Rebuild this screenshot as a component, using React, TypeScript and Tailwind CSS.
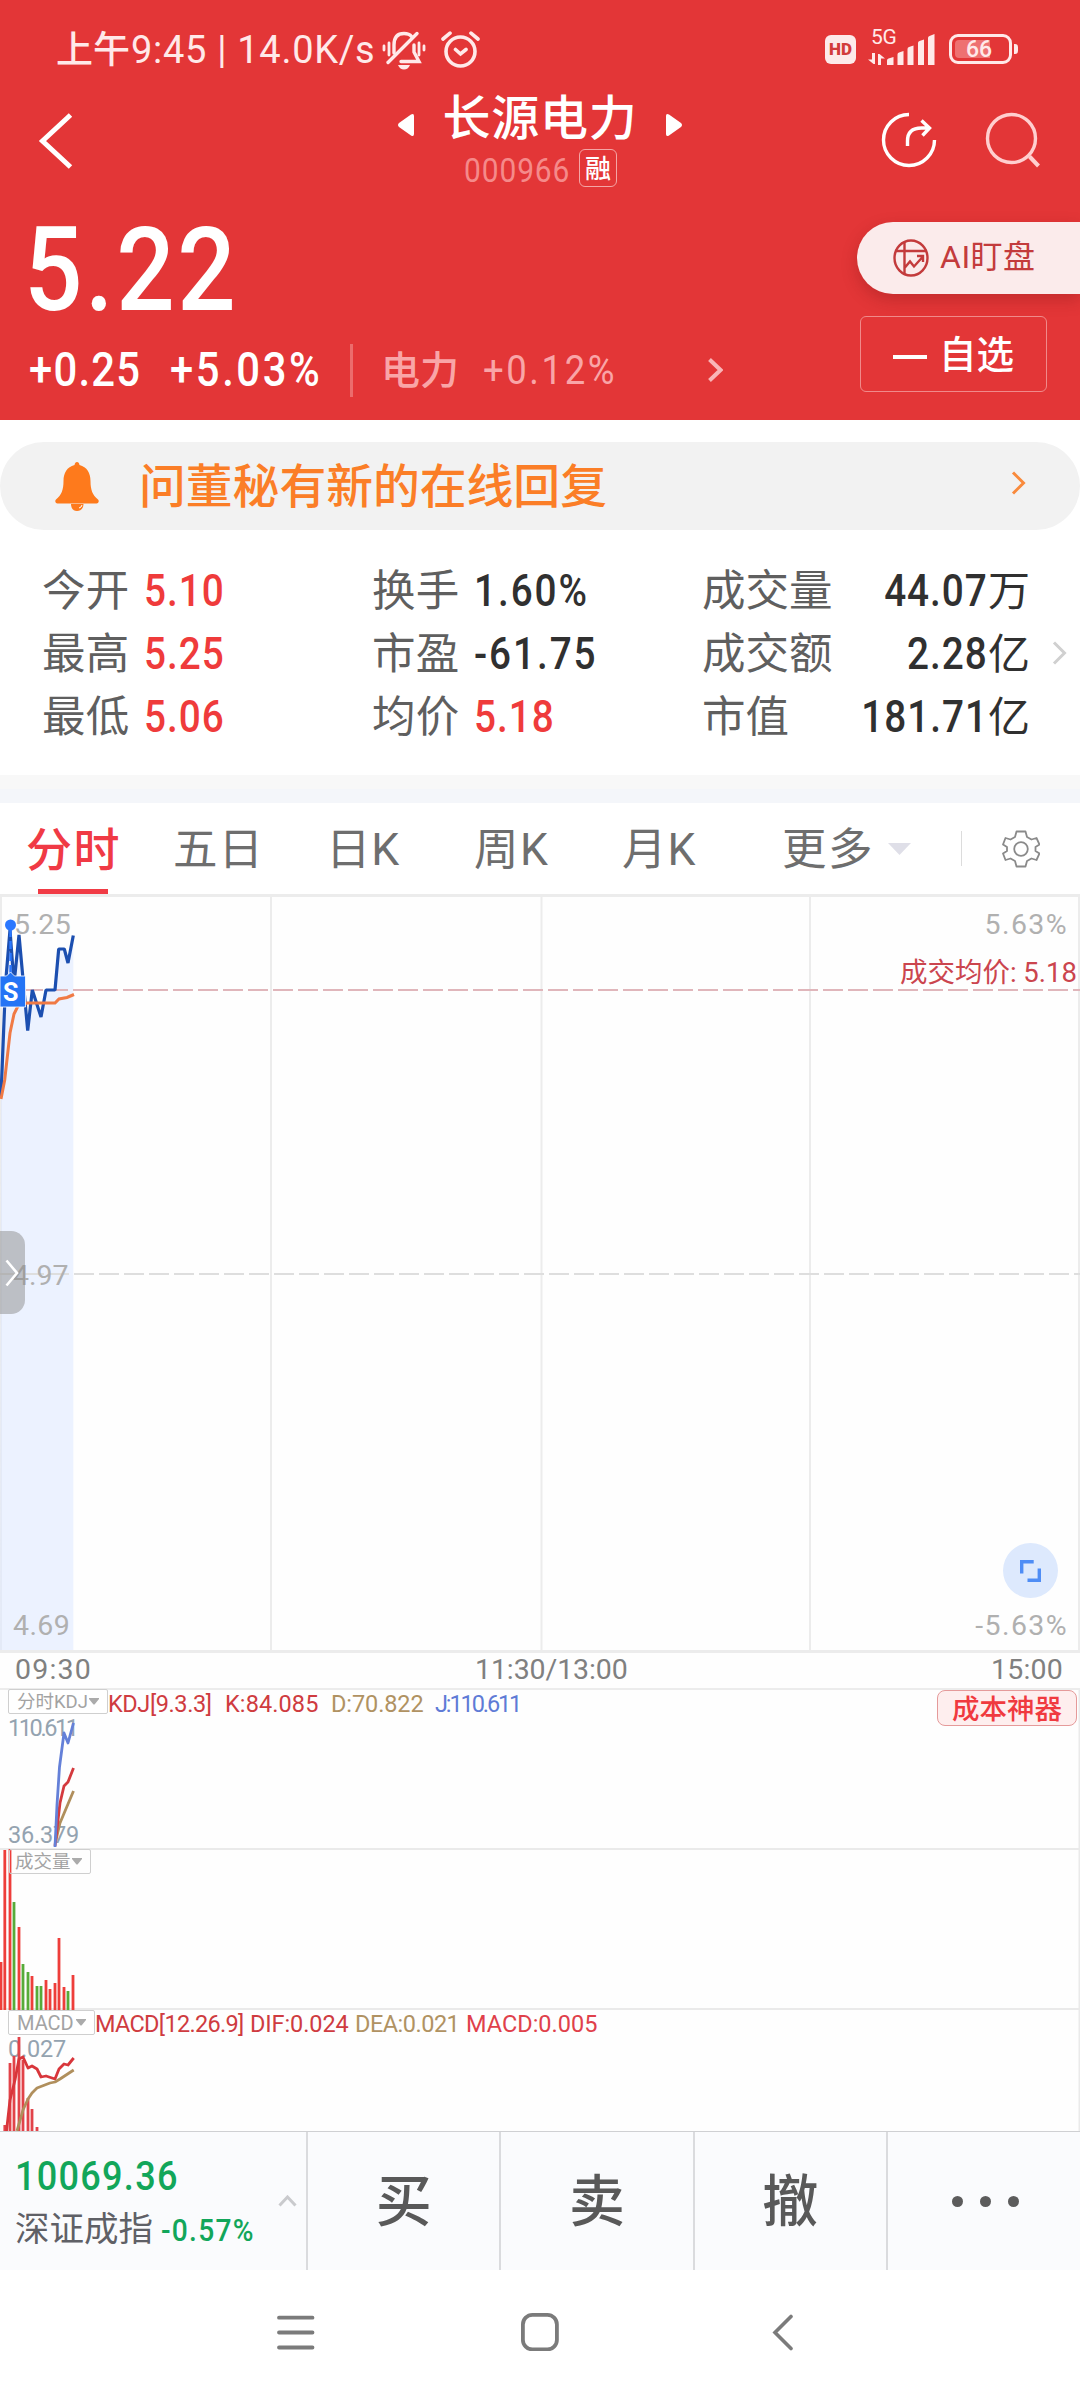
import clsx from "clsx";
import type { ReactNode } from "react";

const CJK = "font-['Noto_Sans_CJK_SC',sans-serif]";
const LATIN = "font-[Roboto,'Noto_Sans_CJK_SC',sans-serif]";

// narrow figures used for every price
function Num({ children, className }: { children: ReactNode; className?: string }) {
  return (
    <span
      className={clsx(
        LATIN,
        "inline-block whitespace-nowrap leading-none tracking-[0.025em] scale-x-[0.88]",
        className,
      )}
    >
      {children}
    </span>
  );
}

function StatusBar() {
  return (
    <div className="flex h-[72px] pl-[56px] text-[#ffe9e9]">
      <div className={clsx(LATIN, "w-[326px] pt-[28px] text-[38px] leading-[44px] whitespace-nowrap font-[450]")}>
        <span className="text-[37px]">上午</span>
        <span className="ml-px tracking-[0.7px]">9:45 | 14.0K/s</span>
      </div>
      <svg className="mt-[31px]" width="44" height="39" viewBox="0 0 44 39" fill="none" stroke="currentColor" strokeWidth="3.4" strokeLinecap="round">
        <path d="M2 15v4M7 12v12M37 12v12M42 15v4" strokeWidth="2.8" />
        <path d="M12 22V14C12 6 16 2.500 22 2.500 25 2.500 28 3.500 29.500 5.500" />
        <path d="M32 14v7l5 9.500H19" />
        <path d="M35 2.500 6 31.500" />
        <path d="M16 34h12q-2 4.500-6 4.500t-6-4.500z" fill="currentColor" stroke="none" />
      </svg>
      <svg className="mt-[31px] ml-[15px]" width="39" height="37" viewBox="0 0 39 37" fill="none" stroke="currentColor" strokeWidth="3.6" strokeLinecap="round">
        <circle cx="19.500" cy="20.500" r="14.500" />
        <path d="M2 8 9 2.200M37 8 30 2.200M14.500 18.500l5 4.500 5.500-4.500" />
      </svg>
      <div className="ml-[345px] mt-[35px] flex h-[29px] w-[31px] items-center justify-center rounded-[6px] bg-[#fdeaea]">
        <span className="font-[Roboto] text-[17px] leading-none font-black text-[#d23b3b]">HD</span>
      </div>
      <div className="ml-[12px] mt-[29px] w-[20px]">
        <div className="font-[Roboto] w-[28px] pl-[3px] text-[21px] leading-[17px] tracking-[-0.2px]">5G</div>
        <svg className="mt-[7px]" width="17" height="12" viewBox="0 0 17 12" fill="currentColor">
          <path d="M4 0h3v11H5.500L0 6.500h4zM10 12h3V5.500h4L11.500 1H10z" />
        </svg>
      </div>
      <svg className="mt-[34px] -ml-px" width="48" height="31" viewBox="0 0 48 31" fill="currentColor">
        <path d="M0 31v-4.500q0-1.500 1.500-2L6.500 23v8zM10.500 31V20.500q0-1.500 1.500-2l4.500-1.500v14zM20.500 31V15q0-1.500 1.500-2l4.500-1.500V31zM31 31V9q0-1.500 1.500-2L37 5.500V31zM41 31V4q0-1.500 1.500-2L47.500 0v31z" />
      </svg>
      <div className="relative ml-[14px] mt-[34px] flex h-[30px] w-[63px] items-center rounded-[9px] border-[3px] border-current pl-[3px]">
        <div className="h-[18px] w-[35px] rounded-l-[4px] bg-[#ee7171]" />
        <span className="absolute left-[14px] top-[1px] font-[Roboto] text-[23px] leading-[23px] font-medium">66</span>
      </div>
      <div className="ml-[2px] mt-[44px] h-[10px] w-[4px] rounded-r-[3px] bg-current" />
    </div>
  );
}

function TitleBar() {
  return (
    <div className="flex h-[128px] text-white">
      <div className="w-[398px] pl-[38px] pt-[40px]">
        <svg width="36" height="58" viewBox="0 0 36 58" fill="none" stroke="currentColor" strokeWidth="5">
          <path d="M32.500 3 4.500 29 32.500 55" />
        </svg>
      </div>
      <div className="w-[284px]">
        <div className="flex h-[76px] justify-between">
          <svg className="mt-[42px]" width="16" height="22" viewBox="0 0 16 22" fill="currentColor">
            <path d="M16 2v18q0 3-3 1.500L1 13q-2-2 0-4L13 .5q3-1.500 3 1.500z" />
          </svg>
          <h1 className={clsx(CJK, "mt-[17px] text-[48px] leading-[50px] font-medium tracking-[0.8px]")}>长源电力</h1>
          <svg className="mt-[42px]" width="16" height="22" viewBox="0 0 16 22" fill="currentColor">
            <path d="M0 2v18q0 3 3 1.500L15 13q2-2 0-4L3 .5Q0-1 0 2z" />
          </svg>
        </div>
        <div className="flex h-[40px] items-center pl-[66px]">
          <div className="w-[115px] pt-[4px]">
            <Num className="origin-left text-[34px] text-[#f58a8a] tracking-[0.03em]!">000966</Num>
          </div>
          <div className={clsx(CJK, "flex h-[38px] w-[38px] items-center justify-center rounded-[6px] border border-[#f4a5a5] text-[26px] leading-[32px] font-medium")}>
            <span className="-mt-[2px]">融</span>
          </div>
        </div>
      </div>
      <div className="flex pl-[199px] pt-[40px]">
        <svg width="56" height="56" viewBox="0 0 56 56" fill="none" stroke="currentColor" strokeWidth="3.4">
          <path d="M28 2.500A25.500 25.500 0 1 0 53.500 28" />
          <path d="M26.500 34v-5q0-13 14-13h7M40.500 8.500l8 7.500-7 7.500" />
        </svg>
        <svg className="ml-[48px]" width="56" height="56" viewBox="0 0 56 56" fill="none" stroke="#ffcfcf" strokeWidth="3.4">
          <circle cx="26.500" cy="26.500" r="24" />
          <path d="m44.500 44.500 9 9.500" strokeWidth="4" />
        </svg>
      </div>
    </div>
  );
}

function Quote() {
  return (
    <div className="flex h-[220px] text-white">
      <div className="w-[857px] pl-[24px]">
        <div className="pt-[10px]">
          <Num className="origin-left text-[117px] leading-[120px]! font-medium">5.22</Num>
        </div>
        <div className="mt-[12px] flex h-[56px] items-center pl-[5px]">
          <div className="w-[141px] pt-[2px]">
            <Num className="origin-left text-[47.5px] font-medium tracking-[0.03em]!">+0.25</Num>
          </div>
          <div className="w-[180px] pt-[2px]">
            <Num className="origin-left text-[47.5px] font-medium tracking-[0.062em]!">+5.03%</Num>
          </div>
          <div className="h-[53px] w-[3px] bg-[#ec6c6c]" />
          <div className={clsx(CJK, "ml-[28px] w-[102px] text-[39px] leading-[50px] text-[#f9a5a7] font-medium -mt-[6px]")}>电力</div>
          <div className="w-[225px] text-[#f9a5a7]">
            <Num className="origin-left text-[41.500px] tracking-[0.07em]!">+0.12%</Num>
          </div>
          <svg width="15" height="24" viewBox="0 0 15 24" fill="none" stroke="#f9b5b7" strokeWidth="4">
            <path d="m1.500 1.500 11 10.500-11 10.500" />
          </svg>
        </div>
      </div>
      <div className="w-[223px] pt-[22px]">
        <div className="flex h-[72px] items-center rounded-l-full bg-[#fbebeb] pl-[36px] text-[#c33b3c] shadow-[0_6px_16px_rgba(120,20,20,0.3)]">
          <svg width="36" height="38" viewBox="0 0 36 38" fill="none" stroke="currentColor" strokeWidth="2.4">
            <ellipse cx="18" cy="19" rx="16.500" ry="17.500" />
            <path d="M11.500 3v32M2 12h32M11.500 29l5.500-6.500 4 5 9-10M24 17h6v6" />
          </svg>
          <span className={clsx(LATIN, "ml-[11px] -mt-[2px] text-[32px] leading-[40px] whitespace-nowrap tracking-[0.5px]")}>AI盯盘</span>
        </div>
        <div className="ml-[3px] mt-[22px] flex h-[76px] w-[187px] items-center rounded-[6px] border border-[#f08a8a] pl-[32px]">
          <div className="mt-[6px] h-[4px] w-[34px] bg-white" />
          <span className={clsx(CJK, "ml-[12px] -mt-[4px] text-[37.500px] leading-[50px] font-medium whitespace-nowrap")}>自选</span>
        </div>
      </div>
    </div>
  );
}

function Notice() {
  return (
    <div className="mt-[22px] flex h-[88px] items-center rounded-full bg-[#f2f2f2]">
      <svg className="ml-[55px]" width="44" height="49" viewBox="0 0 44 49" fill="#fe7a1c">
        <path d="M22 0q2 0 2.500 3C32 5 35.500 11 35.500 19c0 9 2 14 7.500 18.500 1.500 1.500.5 4-1.500 4H2.500c-2 0-3-2.500-1.500-4C6.500 33 8.500 28 8.500 19c0-8 3.500-14 11-16Q20 0 22 0z" />
        <path d="M16 42h12.500c0 4-2.500 7-6.500 7s-6-3-6-7z" />
        <path d="M24 46q2.500-.5 3-3" stroke="#fff" fill="none" />
      </svg>
      <span className={clsx(CJK, "ml-[40px] w-[872px] -mt-[7px] text-[46.8px] leading-[60px] text-[#fb7e27] font-[450]")}>
        问董秘有新的在线回复
      </span>
      <svg className="-mt-[7px]" width="15" height="24" viewBox="0 0 15 24" fill="none" stroke="#f98a3c" strokeWidth="3">
        <path d="m2 1.500 10.500 10.500-10.500 10.500" />
      </svg>
    </div>
  );
}

const stats = [
  [["今开", "5.10", true], ["换手", "1.60%", false], ["成交量", "44.07", "万"]],
  [["最高", "5.25", true], ["市盈", "-61.75", false], ["成交额", "2.28", "亿"]],
  [["最低", "5.06", true], ["均价", "5.18", true], ["市值", "181.71", "亿"]],
] as const;

function Stats() {
  return (
    <div className="h-[245px] pt-[29px]">
      {stats.map(([a, b, c], i) => (
        <div key={a[0]} className={clsx(CJK, "flex h-[63px] items-center pl-[42px] text-[43.5px] leading-[63px] text-[#5f5f5f]")}>
          {[a, b].map(([label, value, up]) => (
            <div key={label} className="flex w-[330px] items-center">
              <span className="-mt-[6px] w-[102px] tracking-[0.2px]">{label}</span>
              <Num className={clsx("origin-left text-[44px] font-medium", up ? "text-[#ef3b3b]" : "text-[#303030] tracking-[0.05em]!")}>{value}</Num>
            </div>
          ))}
          <div className="flex w-[328px] items-center justify-between text-[#303030]">
            <span className="-mt-[6px] text-[#5f5f5f]">{c[0]}</span>
            <div className="flex items-center">
              <Num className="origin-right text-[44px] font-medium">{c[1]}</Num>
              <span className="-mt-[6px] text-[42px]">{c[2]}</span>
            </div>
          </div>
          {i === 1 && (
            <svg className="ml-[22px] -mt-[2px]" width="15" height="24" viewBox="0 0 15 24" fill="none" stroke="#d0d0d0" strokeWidth="3">
              <path d="m2 1.500 10.500 10.500-10.500 10.500" />
            </svg>
          )}
        </div>
      ))}
    </div>
  );
}

function Tabs() {
  return (
    <div className={clsx(LATIN, "flex h-[91px] items-start text-[44.5px] leading-[60px] whitespace-nowrap text-[#6e6e6e]")}>
      <div className="w-[173px] pl-[26px] font-medium text-[#f03a45]">
        <div className="pt-[17px] text-[46px] tracking-[1.5px]">分时</div>
        <div className="ml-[12px] mt-[9px] h-[5px] w-[70px] bg-[#f13b45]" />
      </div>
      <div className="w-[153px] pt-[17px] tracking-[1px]">五日</div>
      <div className="w-[148px] pt-[17px] tracking-[0.8px]">日K</div>
      <div className="w-[148px] pt-[17px] tracking-[1.5px]">周K</div>
      <div className="w-[160px] pt-[17px] tracking-[1px]">月K</div>
      <div className="w-[106px] pt-[17px] tracking-[1.5px]">更多</div>
      <svg className="mt-[40px]" width="23" height="12" viewBox="0 0 23 12" fill="#dfdfe8">
        <path d="M0 0h23L11.500 12z" />
      </svg>
      <div className="ml-[50px] mt-[28px] h-[35px] w-px bg-[#dcdcdc]" />
      <svg className="ml-[40px] mt-[27px]" width="38" height="38" viewBox="0 0 38 38" fill="none" stroke="#8a8a8a" strokeWidth="1.8" strokeLinejoin="round">
        <path d="M14.500 1.500h9l1.500 5.500 4.500 2.500 5-1.500 3 6.500-4 2.500v4l4 2.500-3 6.500-5-1.500-4.500 2.500-1.500 5.500h-9L13 31l-4.500-2.500-5 1.500-2.500-6.500L5 21v-4l-4-2.500L3.500 8l5 1.500L13 7z" />
        <circle cx="19" cy="19" r="6.800" />
      </svg>
    </div>
  );
}

const price = "1,202 4.500,115 6,84 10,36 14,90 19,41 27.700,136.500 32.300,96 41,123 46,96 55,96 58.700,55 64.300,55 68,69 73.300,41.500";

function PriceChart() {
  return (
    <div className={clsx(LATIN, "relative h-[759px] text-[28.5px] leading-[30px] whitespace-nowrap text-[#b0b0b0]")}>
      <svg width="1080" height="759" viewBox="0 0 1080 759" fill="none">
        <rect width="1080" height="759" fill="#fefefe" />
        <path d="M0 1.500h1080M0 757.500h1080" stroke="#ececec" strokeWidth="3" />
        <path d="M1 0v759M271 0v759M541.500 0v759M810 0v759M1079 0v759" stroke="#ececec" strokeWidth="2" />
        <polygon points={`0,756 ${price} 73.300,756`} fill="#dfe9ff" fillOpacity="0.6" />
        <path d="M0 96h1080" stroke="#e0b6bb" strokeWidth="2" strokeDasharray="20 5" strokeDashoffset="2" />
        <path d="M0 380h1080" stroke="#dedede" strokeWidth="2" strokeDasharray="20 5" strokeDashoffset="1" />
        <polyline points={price} stroke="#1c4fb0" strokeWidth="3.2" strokeLinejoin="bevel" />
        <polyline points="1,205 4.700,186 10,139 14,120 18,112 27,109 55,109 59,105 67,103.500 74,100.500" stroke="#f07a45" strokeWidth="3" />
        <path d="M10.500 35v50" stroke="#2b78ff" strokeWidth="2.400" strokeDasharray="8 4" />
        <circle cx="10.500" cy="31" r="5.500" fill="#2b78ff" />
        <path d="M0 82h6.500l4-4 4 4H25.500v31H0z" fill="#2474f5" stroke="#fff" strokeWidth="0.8" />
      </svg>
      <span className="absolute left-[3px] top-[85px] font-[Roboto] text-[25px] leading-[28px] font-bold text-white">S</span>
      <span className="absolute left-[14px] top-[16px] tracking-[0.4px]">5.25</span>
      <span className="absolute left-[13px] top-[367px]">4.97</span>
      <span className="absolute left-[13px] top-[717px] tracking-[0.4px]">4.69</span>
      <span className="absolute right-[12px] top-[16px] tracking-[1.4px]">5.63%</span>
      <span className="absolute right-[12px] top-[717px] tracking-[1.4px]">-5.63%</span>
      <span className="absolute right-[3px] top-[64px] text-[27.5px] text-[#cb454e]">成交均价: 5.18</span>
      <div className="absolute left-0 top-[337px] flex h-[83px] w-[25px] items-center rounded-r-[14px] bg-[#8b8b8b]/50 pl-[5px]">
        <svg width="14" height="28" viewBox="0 0 14 28" fill="none" stroke="#fff" strokeWidth="2.600">
          <path d="m1.500 1.500 10.500 12.500L1.500 26.500" />
        </svg>
      </div>
      <div className="absolute left-[1003px] top-[649px] flex h-[55px] w-[55px] items-center justify-center rounded-full bg-[#dde9fd]">
        <svg width="21" height="22" viewBox="0 0 21 22" fill="none" stroke="#4f8df5" strokeWidth="3.400">
          <path d="M1.700 13.500V1.700h12M19.300 8.500v11.800H7.500" />
        </svg>
      </div>
    </div>
  );
}

function PanelPicker({ label, className }: { label: string; className: string }) {
  return (
    <div className={clsx("absolute flex h-[25px] items-center justify-between rounded-[2px] border border-[#cfcfcf] pr-[8px] text-[#a3a3a3]", className)}>
      <span>{label}</span>
      <svg className="shrink-0" width="10" height="7" viewBox="0 0 10 7" fill="#ababab">
        <path d="M0 0h10v1L5.500 6.500h-1L0 1z" />
      </svg>
    </div>
  );
}

const volume = [
  [1, 1962, 0], [4.8, 1850, 0], [10, 1849, 0], [14, 1902, 1], [19, 1927, 0], [23, 1964, 1],
  [28, 1972, 1], [32, 1976, 0], [37, 1986, 1], [41, 1986, 1], [46, 1980, 0], [50, 1989, 0],
  [55, 1983, 0], [59, 1938, 0], [64, 1987, 0], [68, 1991, 1], [73, 1975, 0],
];

const macd = [[4.8, 2125], [10, 2063], [14, 2056], [19, 2037], [23, 2060], [28, 2098], [32, 2109], [37, 2127]];

function Indicators() {
  return (
    <div className={clsx(LATIN, "relative h-[443px] border-t-2 border-[#ececec] text-[23.5px] leading-[26px] whitespace-nowrap text-[#cf3b40]")}>
      {/* one pixel per unit, numbered from the top of the page */}
      <svg className="absolute left-0 top-0" width="1080" height="441" viewBox="0 1690 1080 441" fill="none">
        <rect y="1690" width="1080" height="441" fill="#fefefe" />
        <path d="M0 1849h1080M0 2009h1080M1079.500 1690v441" stroke="#eaeaea" strokeWidth="2" />
      </svg>
      <span className="absolute left-[8px] top-[25px] text-[#94a3b0] tracking-[-2.4px]">110.611</span>
      <span className="absolute left-[8px] top-[132px] text-[#94a3b0] tracking-[-0.2px]">36.379</span>
      <span className="absolute left-[8px] top-[346px] text-[#94a3b0] tracking-[-0.2px]">0.027</span>
      <svg className="absolute left-0 top-0" width="1080" height="441" viewBox="0 1690 1080 441" fill="none" strokeWidth="2.800" strokeLinejoin="round">
        <polyline points="56,1840 60,1823 68,1804 73.500,1791" stroke="#b08f5c" />
        <polyline points="55,1846 60,1803 64,1786 68,1782 73.500,1768" stroke="#d43a3e" />
        <polyline points="55,1847 57,1805 59.500,1767 64,1733 68,1743 73.500,1723" stroke="#6480d8" />
        {volume.map(([x, y, down]) => (
          <path key={x} d={`M${x} ${y}V2010`} stroke={down ? "#57ab3a" : "#ee3e3a"} />
        ))}
        {macd.map(([x, y]) => (
          <path key={x} d={`M${x} ${y}V2131`} stroke="#e24349" />
        ))}
        <polyline points="6.500,2131 10,2100 15,2080 19,2059 23,2057 28,2068 32,2066 37,2069 41,2077 46,2076 55,2079 59,2069 64,2064 68,2065 73.700,2058" stroke="#d8363b" />
        <polyline points="17,2131 23,2110 28,2099 32,2093 37,2088 50,2083 55,2082 60,2079 73.700,2070" stroke="#b08f5c" />
      </svg>
      <PanelPicker label="分时KDJ" className="left-[8px] -top-px w-[100px] bg-white pl-[8px] text-[18.500px]" />
      <PanelPicker label="成交量" className="left-[9px] top-[159px] w-[82px] pl-[5px] text-[18.500px]" />
      <PanelPicker label="MACD" className="left-[8px] top-[320px] w-[87px] bg-white pl-[8px] text-[20px]" />
      <span className="absolute left-[108px] top-px tracking-[-0.4px]">KDJ[9.3.3]</span>
      <span className="absolute left-[225px] top-px tracking-[0.1px]">K:84.085</span>
      <span className="absolute left-[331px] top-px text-[#b09262] tracking-[-0.1px]">D:70.822</span>
      <span className="absolute left-[435px] top-px text-[#5f7bd6] tracking-[-2.1px]">J:110.611</span>
      <span className="absolute left-[95px] top-[321px] tracking-[-0.7px]">MACD[12.26.9]</span>
      <span className="absolute left-[250px] top-[321px] tracking-[-0.1px]">DIF:0.024</span>
      <span className="absolute left-[355px] top-[321px] text-[#b09262] tracking-[-0.5px]">DEA:0.021</span>
      <span className="absolute left-[466px] top-[321px] text-[#e0404a]">MACD:0.005</span>
      <div className={clsx(CJK, "absolute left-[937px] top-0 h-[36px] w-[140px] rounded-[8px] border border-[#e59a9a] bg-[#feeeee] text-center text-[27.500px] leading-[32px] font-medium text-[#f03a3f]")}>
        成本神器
      </div>
    </div>
  );
}

function TradeBar() {
  return (
    <div className={clsx(CJK, "flex h-[139px] border-t border-[#cfd0d3] bg-[#fafbfd] text-[#595959]")}>
      <div className="flex w-[308px] border-r-2 border-[#dadbde]">
        <div className="w-[263px] shrink-0 pl-[15px]">
          <div className="flex h-[66px] items-end">
            <Num className="origin-left text-[41px] leading-[44px]! font-medium text-[#12a65a] tracking-[0.035em]!">10069.36</Num>
          </div>
          <div className="mt-[8px] flex h-[44px] items-center">
            <span className="w-[146px] shrink-0 text-[34.500px] leading-[44px] text-[#5f6066] -mt-[4px] whitespace-nowrap">深证成指</span>
            <Num className="origin-left text-[32px] font-medium text-[#12a65a] tracking-[0.045em]! mt-[3px]">-0.57%</Num>
          </div>
        </div>
        <svg className="mt-[63px] ml-[15px] shrink-0" width="19" height="12" viewBox="0 0 19 12" fill="none" stroke="#c9cacd" strokeWidth="3">
          <path d="m1.500 10.500 8-8.500 8 8.500" />
        </svg>
      </div>
      {["买", "卖", "撤"].map((t) => (
        <div key={t} className="w-[193.300px] border-r-2 border-[#dadbde] pt-[25px] text-center text-[56px] leading-[80px] font-medium">
          {t}
        </div>
      ))}
      <div className="flex flex-1 items-center justify-center gap-[17px] pl-[4px]">
        <i className="h-[11px] w-[11px] rounded-full bg-[#5c5c5c]" />
        <i className="h-[11px] w-[11px] rounded-full bg-[#5c5c5c]" />
        <i className="h-[11px] w-[11px] rounded-full bg-[#5c5c5c]" />
      </div>
    </div>
  );
}

function SystemNav() {
  return (
    <div className="flex h-[130px] bg-white pt-[43px] pl-[277px]">
      <svg width="38" height="38" viewBox="0 0 38 38" fill="none" stroke="#7b7b7b" strokeWidth="3.800" strokeLinecap="round">
        <path d="M2 4.700h33.500M2 19.500h33.500M2 34.500h33.500" />
      </svg>
      <svg className="ml-[206px]" width="38" height="38" viewBox="0 0 38 38" fill="none" stroke="#7b7b7b" strokeWidth="3.800">
        <rect x="1.900" y="1.900" width="34" height="34.500" rx="9.500" />
      </svg>
      <svg className="ml-[213px]" width="22" height="38" viewBox="0 0 22 38" fill="none" stroke="#7b7b7b" strokeWidth="3.600" strokeLinecap="round">
        <path d="M19 3.500 3 19.500l16 16" />
      </svg>
    </div>
  );
}

export default function App() {
  return (
    <div className="h-[2400px] w-[1080px] overflow-hidden bg-white">
      <header className="h-[420px] bg-[#e33637]">
        <StatusBar />
        <TitleBar />
        <Quote />
      </header>
      <Notice />
      <Stats />
      <div className="h-[14px] bg-[#f8f8f8]" />
      <div className="h-[14px] bg-[#f4f6fa]" />
      <Tabs />
      <PriceChart />
      <div className={clsx(LATIN, "flex h-[35px] bg-[#fefefe] pl-[15px] text-[28.500px] leading-[34px] text-[#808080]")}>
        <span className="w-[460px] tracking-[1.2px]">09:30</span>
        <span className="w-[516px] tracking-[-0.1px]">11:30/13:00</span>
        <span className="tracking-[0.2px]">15:00</span>
      </div>
      <Indicators />
      <TradeBar />
      <SystemNav />
    </div>
  );
}
